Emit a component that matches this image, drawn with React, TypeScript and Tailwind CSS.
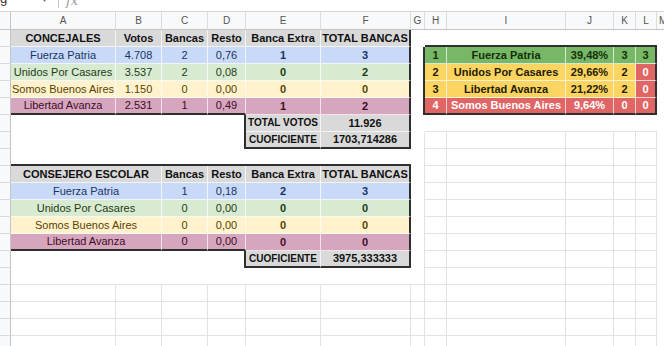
import React from 'react';

type K = 'hdr' | 'blue' | 'green' | 'yellow' | 'pink' | 'gray' | 'rg' | 'ry' | 'rr';
type Bd = 'g' | 'l' | 'd' | 'n';
type C = { t?: string; k?: K; r?: Bd; b?: Bd; span?: boolean; sm?: boolean; bold?: boolean; skip?: boolean };

const FILL: Record<K, string> = {
  hdr: 'bg-[#d9d9d9] text-[#111111] font-bold',
  blue: 'bg-[#c9daf8] text-[#183466]',
  green: 'bg-[#d9ead3] text-[#1d3c10]',
  yellow: 'bg-[#fff2cc] text-[#574300]',
  pink: 'bg-[#d5a6bd] text-[#420d27]',
  gray: 'bg-[#d9d9d9] text-[#111111] font-bold',
  rg: 'bg-[#78b765] text-[#14300a] font-bold',
  ry: 'bg-[#fcd462] text-[#221b00] font-bold',
  rr: 'bg-[#e06666] text-white font-bold',
};
const RB: Record<Bd, string> = {
  g: 'border-r border-r-[#e2e2e2]',
  l: 'border-r border-r-white/70',
  d: 'border-r-2 border-r-[#2f2f2f]',
  n: '',
};
const BB: Record<Bd, string> = {
  g: 'border-b border-b-[#e2e2e2]',
  l: 'border-b border-b-white/70',
  d: 'border-b-2 border-b-[#2f2f2f]',
  n: '',
};

const GRID =
  'grid grid-cols-[11px_105px_46px_46px_38px_75px_90px_14px_22px_119px_48px_22px_21px_1fr]';
const LETTERS = ['A', 'B', 'C', 'D', 'E', 'F', 'G', 'H', 'I', 'J', 'K', 'L', 'M'];
const NROWS = 19;

const map = new Map<string, C>();
const set = (r: number, c: number, v: C) => {
  const key = `${r}-${c}`;
  map.set(key, { ...(map.get(key) || {}), ...v });
};

// Table 1: CONCEJALES
['CONCEJALES', 'Votos', 'Bancas', 'Resto', 'Banca Extra', 'TOTAL BANCAS'].forEach((t, i) =>
  set(1, i, { t, k: 'hdr' })
);
set(1, 5, { r: 'd' });
const T1: [K, string, string, string, string, string, string][] = [
  ['blue', 'Fuerza Patria', '4.708', '2', '0,76', '1', '3'],
  ['green', 'Unidos Por Casares', '3.537', '2', '0,08', '0', '2'],
  ['yellow', 'Somos Buenos Aires', '1.150', '0', '0,00', '0', '0'],
  ['pink', 'Libertad Avanza', '2.531', '1', '0,49', '1', '2'],
];
T1.forEach((row, i) => {
  const r = 2 + i;
  const [k, ...vals] = row;
  vals.forEach((t, c) => set(r, c, { t, k, bold: c >= 4 }));
  set(r, 5, { r: 'd' });
});
[0, 1, 2, 3].forEach((c) => set(5, c, { b: 'd' }));
set(6, 3, { r: 'd' });
set(6, 4, { t: 'TOTAL VOTOS', k: 'gray', sm: true });
set(6, 5, { t: '11.926', k: 'gray', r: 'd' });
set(7, 3, { r: 'd' });
set(7, 4, { t: 'CUOFICIENTE', k: 'gray', sm: true, b: 'd' });
set(7, 5, { t: '1703,714286', k: 'gray', r: 'd', b: 'd' });

// Table 2: CONSEJERO ESCOLAR
[0, 1, 2, 3, 4, 5].forEach((c) => set(8, c, { b: 'd' }));
set(9, 0, { t: 'CONSEJERO ESCOLAR', k: 'hdr', span: true });
set(9, 1, { skip: true });
['Bancas', 'Resto', 'Banca Extra', 'TOTAL BANCAS'].forEach((t, i) => set(9, 2 + i, { t, k: 'hdr' }));
set(9, 5, { r: 'd' });
const T2: [K, string, string, string, string, string][] = [
  ['blue', 'Fuerza Patria', '1', '0,18', '2', '3'],
  ['green', 'Unidos Por Casares', '0', '0,00', '0', '0'],
  ['yellow', 'Somos Buenos Aires', '0', '0,00', '0', '0'],
  ['pink', 'Libertad Avanza', '0', '0,00', '0', '0'],
];
T2.forEach((row, i) => {
  const r = 10 + i;
  const [k, name, ...vals] = row;
  set(r, 0, { t: name, k, span: true });
  set(r, 1, { skip: true });
  vals.forEach((t, j) => set(r, 2 + j, { t, k, bold: j >= 2 }));
  set(r, 5, { r: 'd' });
});
[0, 2, 3].forEach((c) => set(13, c, { b: 'd' }));
set(14, 3, { r: 'd' });
set(14, 4, { t: 'CUOFICIENTE', k: 'gray', sm: true, b: 'd' });
set(14, 5, { t: '3975,333333', k: 'gray', r: 'd', b: 'd' });

// Right ranking table
[7, 8, 9, 10, 11].forEach((c) => set(1, c, { b: 'd' }));
const T3: [K, string][][] = [
  [['rg', '1'], ['rg', 'Fuerza Patria'], ['rg', '39,48%'], ['rg', '3'], ['rg', '3']],
  [['ry', '2'], ['ry', 'Unidos Por Casares'], ['ry', '29,66%'], ['ry', '2'], ['rr', '0']],
  [['ry', '3'], ['ry', 'Libertad Avanza'], ['ry', '21,22%'], ['ry', '2'], ['rr', '0']],
  [['rr', '4'], ['rr', 'Somos Buenos Aires'], ['rr', '9,64%'], ['rr', '0'], ['rr', '0']],
];
T3.forEach((row, i) => {
  const r = 2 + i;
  row.forEach(([k, t], j) => set(r, 7 + j, { t, k }));
  set(r, 6, { r: 'd' });
  set(r, 11, { r: 'd' });
});
[7, 8, 9, 10, 11].forEach((c) => set(5, c, { b: 'd' }));

function defaults(r: number, c: number): { r: Bd; b: Bd } {
  const inAG = c <= 6;
  const inHL = c >= 7 && c <= 11;
  if (inAG) {
    return {
      b: r >= 15 ? 'g' : 'n',
      r: r >= 16 ? 'g' : c === 6 && r >= 7 ? 'g' : 'n',
    };
  }
  if (inHL) {
    return { b: r >= 6 ? 'g' : 'n', r: r >= 7 ? 'g' : 'n' };
  }
  return { r: 'n', b: 'n' };
}

function Row({ r }: { r: number }) {
  const cells: React.ReactNode[] = [];
  for (let c = 0; c < 13; c++) {
    const s = map.get(`${r}-${c}`) || {};
    if (s.skip) continue;
    const d = defaults(r, c);
    const rb = s.r ?? (s.k ? 'l' : d.r);
    const bb = s.b ?? (s.k ? 'l' : d.b);
    const cls = [
      'h-[17px] flex items-center justify-center overflow-hidden whitespace-nowrap leading-none',
      s.span ? 'col-span-2' : '',
      s.k ? FILL[s.k] : 'bg-white',
      RB[rb],
      BB[bb],
      s.sm ? 'text-[10px]' : 'text-[11px]',
      s.bold ? 'font-bold' : '',
    ].join(' ');
    cells.push(
      <div key={c} className={cls}>
        {s.t}
      </div>
    );
  }
  return (
    <>
      <div className="h-[17px] bg-[#f8f9fa] border-r border-r-[#c4c4c4] border-b border-b-[#dadada]" />
      {cells}
    </>
  );
}

export default function App() {
  const rows = Array.from({ length: NROWS }, (_, i) => i + 1);
  return (
    <div className="w-[664px] h-[346px] overflow-hidden bg-white font-['Liberation_Sans',Arial,sans-serif] text-[#222]">
      {/* formula bar remnant */}
      <div className="h-[12px] flex items-start overflow-hidden border-b border-b-[#d6d6d6] bg-white">
        <span className="w-[42px] -mt-[8px] text-[13px] text-[#333] leading-none">g</span>
        <span className="w-[16px] -mt-[6px] text-[10px] text-[#555] leading-none">▾</span>
        <span className="w-[8px] h-[8px] border-l border-l-[#c8c8c8]" />
        <span className="-mt-[6px] text-[13px] italic text-[#9a9a9a] leading-none font-['DejaVu_Serif',serif]">fx</span>
      </div>
      {/* column headers */}
      <div className={`${GRID} h-[18px] bg-[#f8f9fa] border-b border-b-[#c4c4c4]`}>
        <div className="border-r border-r-[#c4c4c4]" />
        {LETTERS.map((l, i) => (
          <div
            key={l}
            className={`flex items-center overflow-hidden text-[10px] text-[#555] ${
              i === 12 ? 'justify-start pl-[2px]' : 'justify-center border-r border-r-[#dcdcdc]'
            }`}
          >
            {l}
          </div>
        ))}
      </div>
      <div className={GRID}>
        {rows.map((r) => (
          <Row key={r} r={r} />
        ))}
      </div>
    </div>
  );
}
